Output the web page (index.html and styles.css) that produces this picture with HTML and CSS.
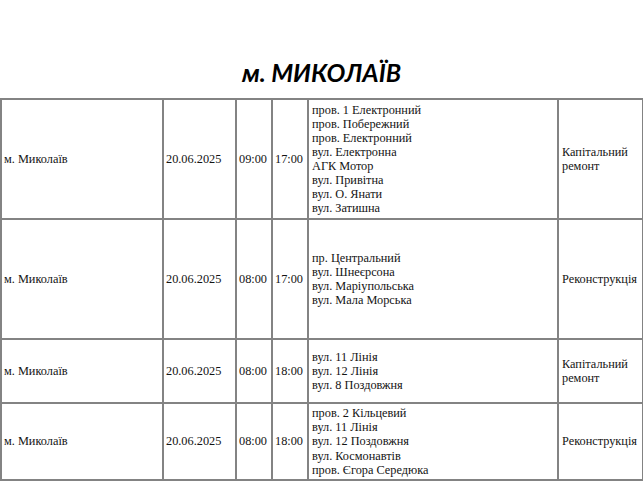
FILE: index.html
```html
<!DOCTYPE html>
<html lang="uk">
<head>
<meta charset="utf-8">
<link rel="stylesheet" href="styles.css">
</head>
<body>
<h1 class="title">м. МИКОЛАЇВ</h1>
<table class="sched">
  <colgroup>
    <col class="c-city"><col class="c-date"><col class="c-time"><col class="c-time2"><col class="c-streets"><col class="c-type">
  </colgroup>
  <tr class="r1">
    <td>м. Миколаїв</td><td>20.06.2025</td><td>09:00</td><td>17:00</td>
    <td class="streets">пров. 1 Електронний<br>пров. Побережний<br>пров. Електронний<br>вул. Електронна<br>АГК Мотор<br>вул. Привітна<br>вул. О. Янати<br>вул. Затишна</td>
    <td class="type">Капітальний ремонт</td>
  </tr>
  <tr class="r2">
    <td>м. Миколаїв</td><td>20.06.2025</td><td>08:00</td><td>17:00</td>
    <td class="streets">пр. Центральний<br>вул. Шнеєрсона<br>вул. Маріупольська<br>вул. Мала Морська</td>
    <td class="type">Реконструкція</td>
  </tr>
  <tr class="r3">
    <td>м. Миколаїв</td><td>20.06.2025</td><td>08:00</td><td>18:00</td>
    <td class="streets">вул. 11 Лінія<br>вул. 12 Лінія<br>вул. 8 Поздовжня</td>
    <td class="type">Капітальний ремонт</td>
  </tr>
  <tr class="r4">
    <td>м. Миколаїв</td><td>20.06.2025</td><td>08:00</td><td>18:00</td>
    <td class="streets">пров. 2 Кільцевий<br>вул. 11 Лінія<br>вул. 12 Поздовжня<br>вул. Космонавтів<br>пров. Єгора Середюка</td>
    <td class="type">Реконструкція</td>
  </tr>
</table>
</body>
</html>
```

FILE: styles.css
```css
html, body {
  margin: 0;
  padding: 0;
  background: #ffffff;
}
.title {
  margin: 0;
  height: 98px;
  padding-bottom: 11px;
  box-sizing: border-box;
  display: flex;
  align-items: flex-end;
  justify-content: center;
  font-family: Lato, "Open Sans", sans-serif;
  font-weight: 700;
  font-style: italic;
  font-size: 25px;
  line-height: 30px;
  color: #000;
}
.sched {
  border-collapse: collapse;
  table-layout: fixed;
  width: 642px;
  font-family: "Liberation Serif", "Times New Roman", "DejaVu Serif", serif;
  font-size: 12.3px;
  line-height: 14.1px;
  color: #141414;
}
.sched td {
  border: 2px solid #838383;
  padding: 1px 1px 1px 2px;
  vertical-align: middle;
  white-space: nowrap;
}
.sched td.streets { padding-left: 3px; }
.sched td.type { white-space: normal; padding-left: 3px; }
.c-city { width: 162px; }
.c-date { width: 73px; }
.c-time { width: 36px; }
.c-time2 { width: 36px; }
.c-streets { width: 250px; }
.c-type { width: 85px; }
.r1 td, .r2 td { height: 116px; }
.r3 td { height: 60px; }
.r4 td { height: 73px; }
```
